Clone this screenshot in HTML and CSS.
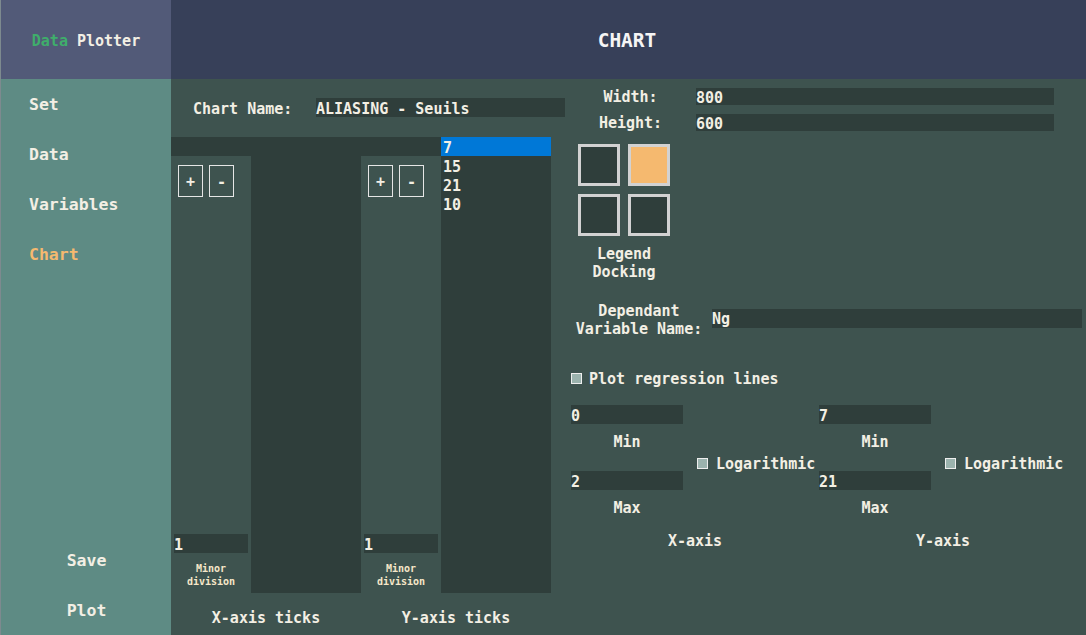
FILE: index.html
```html
<!DOCTYPE html>
<html>
<head>
<meta charset="utf-8">
<title>Data Plotter</title>
<link rel="stylesheet" href="styles.css">
</head>
<body>
<div class="app">
  <aside class="sidebar">
    <div class="logo"><span class="logo-data">Data</span> Plotter</div>
    <nav class="nav">
      <div class="nav-item">Set</div>
      <div class="nav-item">Data</div>
      <div class="nav-item">Variables</div>
      <div class="nav-item active">Chart</div>
    </nav>
    <div class="actions">
      <div class="action">Save</div>
      <div class="action">Plot</div>
    </div>
  </aside>
  <header class="header">CHART</header>
  <main class="main">
    <section class="left">
      <div class="name-row">
        <span class="name-label">Chart Name:</span>
        <div class="field name-field">ALIASING - Seuils</div>
      </div>
      <div class="ticks">
        <div class="tick-group">
          <div class="tick-widget">
            <div class="tick-controls">
              <div class="btns"><div class="btn">+</div><div class="btn">-</div></div>
              <div class="minor">
                <div class="field minor-field">1</div>
                <div class="minor-label">Minor<br>division</div>
              </div>
            </div>
            <div class="tick-list"></div>
          </div>
          <div class="tick-title">X-axis ticks</div>
        </div>
        <div class="tick-group">
          <div class="tick-widget">
            <div class="tick-controls">
              <div class="btns"><div class="btn">+</div><div class="btn">-</div></div>
              <div class="minor">
                <div class="field minor-field">1</div>
                <div class="minor-label">Minor<br>division</div>
              </div>
            </div>
            <div class="tick-list">
              <div class="tick-item selected">7</div>
              <div class="tick-item">15</div>
              <div class="tick-item">21</div>
              <div class="tick-item">10</div>
            </div>
          </div>
          <div class="tick-title">Y-axis ticks</div>
        </div>
      </div>
    </section>
    <section class="right">
      <div class="dim-row">
        <span class="dim-label">Width:</span>
        <div class="field dim-field">800</div>
      </div>
      <div class="dim-row">
        <span class="dim-label">Height:</span>
        <div class="field dim-field">600</div>
      </div>
      <div class="legend">
        <div class="legend-grid">
          <div class="dock"></div>
          <div class="dock on"></div>
          <div class="dock"></div>
          <div class="dock"></div>
        </div>
        <div class="legend-label">Legend<br>Docking</div>
      </div>
      <div class="dep-row">
        <div class="dep-label">Dependant<br>Variable Name:</div>
        <div class="field dep-field">Ng</div>
      </div>
      <div class="check-row regression">
        <span class="check"></span><span>Plot regression lines</span>
      </div>
      <div class="axes">
        <div class="axis">
          <div class="field axis-field">0</div>
          <div class="axis-label">Min</div>
          <div class="check-row log"><span class="check"></span><span>Logarithmic</span></div>
          <div class="field axis-field">2</div>
          <div class="axis-label">Max</div>
          <div class="axis-title">X-axis</div>
        </div>
        <div class="axis">
          <div class="field axis-field">7</div>
          <div class="axis-label">Min</div>
          <div class="check-row log"><span class="check"></span><span>Logarithmic</span></div>
          <div class="field axis-field">21</div>
          <div class="axis-label">Max</div>
          <div class="axis-title">Y-axis</div>
        </div>
      </div>
    </section>
  </main>
</div>
</body>
</html>
```
FILE: styles.css
```css
* { box-sizing: border-box; }
html, body { margin: 0; padding: 0; }
body {
  width: 1086px;
  height: 635px;
  overflow: hidden;
  font-family: "DejaVu Sans Mono", "Liberation Mono", monospace;
  font-weight: bold;
  font-size: 15px;
  color: #f3efe4;
  background: #3e534f;
}
.app {
  display: grid;
  grid-template-columns: 171px 1fr;
  grid-template-rows: 79px 556px;
  height: 635px;
}
.sidebar {
  grid-row: 1 / 3;
  grid-column: 1;
  display: flex;
  flex-direction: column;
  background: #5e8b84;
  border-left: 1px solid #7d8a8f;
}
.logo {
  height: 79px;
  background: #525a78;
  display: flex;
  align-items: center;
  justify-content: center;
  padding-top: 2px;
  font-size: 15px;
  color: #f3efe4;
  white-space: pre;
}
.logo-data { color: #3fae6b; }
.nav { flex: 1; }
.nav-item {
  height: 50px;
  line-height: 50px;
  padding-top: 1px;
  padding-left: 28px;
  font-size: 16.5px;
}
.nav-item.active { color: #f5b96f; }
.actions { display: flex; flex-direction: column; }
.action {
  height: 50px;
  line-height: 50px;
  padding-top: 1px;
  padding-left: 1px;
  text-align: center;
  font-size: 16.5px;
}
.header {
  grid-row: 1;
  grid-column: 2;
  background: #374059;
  display: flex;
  align-items: center;
  justify-content: center;
  padding-top: 2px;
  padding-right: 3px;
  font-size: 19.5px;
  color: #f5f5f5;
}
.main {
  grid-row: 2;
  grid-column: 2;
  display: flex;
  background: #3e534f;
}
.field {
  background: #2f3e3b;
  height: 19px;
  line-height: 19px;
  padding-top: 2px;
  white-space: pre;
  color: #f3efe4;
}
.left {
  width: 394px;
  display: flex;
  flex-direction: column;
}
.name-row {
  display: flex;
  margin-top: 19px;
  height: 19px;
  line-height: 19px;
}
.name-label {
  width: 145px;
  padding-left: 22px;
  padding-top: 2px;
}
.name-field { width: 249px; }
.ticks {
  display: flex;
  margin-top: 20px;
}
.tick-group { display: flex; flex-direction: column; }
.tick-widget {
  display: flex;
  height: 456px;
}
.tick-controls {
  width: 80px;
  border-top: 19px solid #2f3e3b;
  display: flex;
  flex-direction: column;
  justify-content: space-between;
  padding-bottom: 5px;
}
.btns {
  display: flex;
  gap: 6px;
  padding: 9px 0 0 7px;
}
.btn {
  width: 25px;
  height: 32px;
  border: 1px solid #e6e6e6;
  display: flex;
  align-items: center;
  justify-content: center;
  padding-top: 1px;
  font-size: 15px;
}
.minor { display: flex; flex-direction: column; align-items: center; }
.minor-field { width: 74px; font-size: 15px; }
.minor-label {
  margin-top: 8px;
  padding-top: 1px;
  font-size: 10px;
  line-height: 13px;
  text-align: center;
  color: #f6e7c9;
}
.tick-list {
  width: 110px;
  background: #2f3e3b;
}
.tick-item {
  height: 19px;
  line-height: 19px;
  padding-top: 2px;
  padding-left: 2px;
}
.tick-item.selected { background: #0078d7; }
.tick-title {
  margin-top: 15px;
  padding-top: 1px;
  height: 18px;
  line-height: 18px;
  text-align: center;
}
.right {
  flex: 1;
  display: flex;
  flex-direction: column;
  padding-top: 9px;
}
.dim-row {
  display: flex;
  height: 17px;
  line-height: 17px;
  margin-bottom: 9px;
}
.dim-label { width: 131px; text-align: center; padding-top: 1px; }
.dim-field { width: 358px; height: 17px; line-height: 17px; }
.legend {
  margin-left: 13px;
  margin-top: 4px;
  width: 92px;
}
.legend-grid {
  display: grid;
  grid-template-columns: 42px 42px;
  grid-auto-rows: 42px;
  gap: 8px;
}
.dock {
  border: 3px solid #d2d2d2;
  background: #2f3e3b;
}
.dock.on { background: #f5b96f; }
.legend-label {
  margin-top: 8px;
  padding-top: 1px;
  line-height: 18px;
  text-align: center;
}
.dep-row {
  display: flex;
  margin-top: 20px;
  margin-left: 6px;
}
.dep-label {
  width: 136px;
  padding-top: 1px;
  line-height: 18px;
  text-align: center;
}
.dep-field {
  width: 370px;
  margin-left: 5px;
  margin-top: 8px;
  padding-top: 1px;
}
.check-row {
  display: flex;
  align-items: center;
  gap: 7px;
}
.check {
  width: 11px;
  height: 11px;
  background: #9bb3ae;
  border: 1px solid #eeeeee;
}
.regression {
  margin-top: 31px;
  margin-left: 6px;
  height: 19px;
  line-height: 19px;
}
.regression span:last-child { padding-top: 1px; }
.axes {
  display: flex;
  margin-left: 6px;
  margin-top: 17px;
}
.axis {
  width: 248px;
  display: flex;
  flex-direction: column;
}
.axis-field { width: 112px; }
.axis-label {
  width: 112px;
  margin-top: 8px;
  padding-top: 1px;
  height: 18px;
  line-height: 18px;
  text-align: center;
}
.log {
  height: 21px;
  line-height: 17px;
  align-items: flex-end;
  padding-left: 126px;
  gap: 8px;
}
.log span:last-child { margin-bottom: -2px; }
.log .check { margin-bottom: 2px; }
.axis-title {
  margin-top: 15px;
  padding-top: 1px;
  height: 18px;
  line-height: 18px;
  text-align: center;
}
```
